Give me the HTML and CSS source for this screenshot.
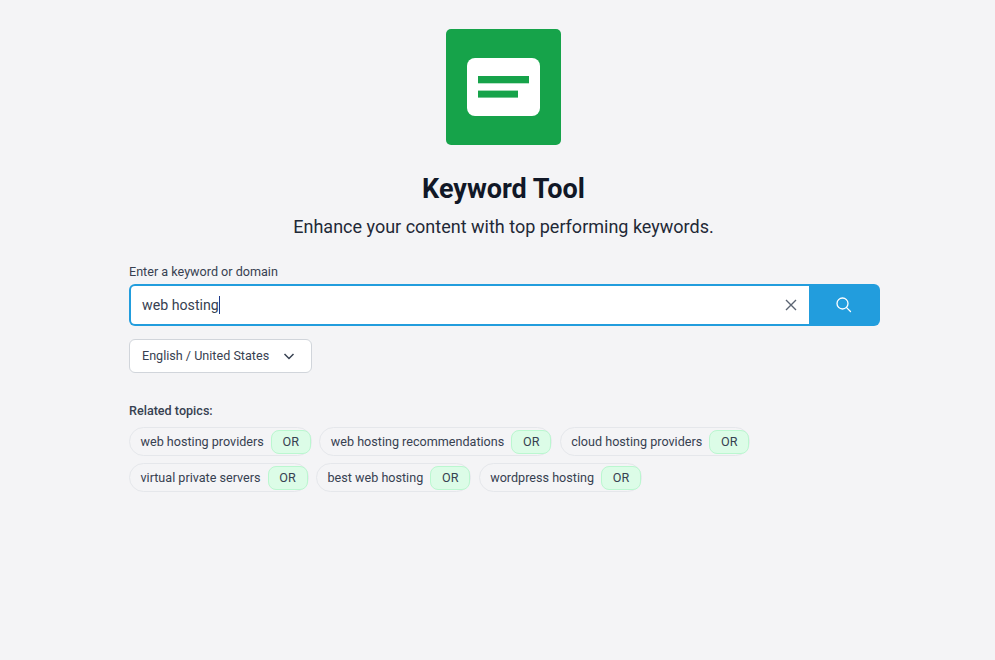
FILE: index.html
```html
<!DOCTYPE html>
<html lang="en">
<head>
<meta charset="utf-8">
<title>Keyword Tool</title>
<link rel="stylesheet" href="styles.css">
</head>
<body>
<main class="page">
  <div class="hero">
    <div class="logo">
      <svg width="73" height="58" viewBox="0 0 73 58"><rect width="73" height="58" rx="8" fill="#fff"/><rect x="11" y="18" width="51" height="7.3" fill="#16a34a"/><rect x="11" y="32.6" width="40" height="7" fill="#16a34a"/></svg>
    </div>
    <h1 class="title">Keyword Tool</h1>
    <p class="subtitle">Enhance your content with top performing keywords.</p>
  </div>
  <div class="form">
    <label class="label">Enter a keyword or domain</label>
    <div class="search">
      <div class="field">
        <span class="value">web hosting</span><span class="caret"></span>
        <svg class="clear" width="14" height="14" viewBox="0 0 14 14"><path d="M2 2l10 10M12 2L2 12" stroke="#5b6472" stroke-width="1.4" fill="none"/></svg>
      </div>
      <button class="go" type="button" aria-label="Search">
        <svg width="18" height="18" viewBox="0 0 18 18"><circle cx="7.5" cy="7.5" r="5.5" stroke="#fff" stroke-width="1.3" fill="none"/><path d="M11.6 11.6l3.9 3.9" stroke="#fff" stroke-width="1.3" fill="none" stroke-linecap="round"/></svg>
      </button>
    </div>
    <button class="select" type="button">
      <span>English / United States</span>
      <svg width="12" height="8" viewBox="0 0 12 8"><path d="M1.5 2l4.5 4.5 4.5-4.5" stroke="#374151" stroke-width="1.5" fill="none"/></svg>
    </button>
    <div class="related">Related topics:</div>
    <div class="rows">
      <div class="row">
        <div class="pill"><span>web hosting providers</span><b class="or">OR</b></div>
        <div class="pill"><span>web hosting recommendations</span><b class="or">OR</b></div>
        <div class="pill"><span>cloud hosting providers</span><b class="or">OR</b></div>
      </div>
      <div class="row">
        <div class="pill"><span>virtual private servers</span><b class="or">OR</b></div>
        <div class="pill"><span>best web hosting</span><b class="or">OR</b></div>
        <div class="pill"><span>wordpress hosting</span><b class="or">OR</b></div>
      </div>
    </div>
  </div>
</main>
</body>
</html>
```
FILE: styles.css
```css
* { box-sizing: border-box; }
html, body { margin: 0; height: 100%; }
body { background: #f4f4f6; font-family: Roboto, "Liberation Sans", sans-serif; color: #111827; overflow: hidden; }
.page { display: flex; flex-direction: column; align-items: center; padding-top: 29px; padding-left: 14px; }
.hero { display: flex; flex-direction: column; align-items: center; padding-right: 2px; }
.logo { width: 115px; height: 116px; background: #16a34a; border-radius: 5px; display: flex; align-items: center; justify-content: center; }
.title { margin: 28px 0 0; font-size: 27px; line-height: 32px; font-weight: 700; color: #111827; }
.subtitle { margin: 9px 0 0; font-size: 18px; line-height: 26px; color: #1f2937; }
.form { width: 751px; margin-top: 23px; }
.label { display: block; font-size: 12.6px; line-height: 18px; color: #374151; }
.search { display: flex; height: 42px; margin-top: 3px; border-radius: 6px; background: #229ddd; }
.field { flex: 1; margin: 2px 0 2px 2px; background: #fff; border-radius: 4px 0 0 4px; display: flex; align-items: center; padding: 0 11px; font-size: 14.2px; color: #374151; }
.caret { width: 1px; height: 18px; background: #1e3a8a; }
.clear { margin-left: auto; }
.go { width: 71px; border: 0; background: transparent; padding: 0 2px 0 0; display: flex; align-items: center; justify-content: center; }
.select { display: flex; align-items: center; justify-content: space-between; width: 183px; height: 34px; margin-top: 13px; padding: 0 16px 1px 12px; background: #fff; border: 1px solid #d1d5db; border-radius: 6px; font: 400 12.6px Roboto, sans-serif; color: #374151; }
.related { margin-top: 29px; font-size: 12.6px; line-height: 18px; font-weight: 500; color: #374151; }
.rows { display: flex; flex-direction: column; row-gap: 7px; margin-top: 7px; }
.row { display: flex; column-gap: 7.5px; }
.pill { display: flex; align-items: center; height: 29px; padding-left: 10.5px; border: 1px solid #e5e7eb; border-radius: 14.5px; font-size: 12.6px; color: #374151; }
.or { display: flex; align-items: center; justify-content: center; width: 40px; height: 24px; margin-left: 7px; background: #dcfce7; border: 1px solid #bbf7d0; border-radius: 8px; font-weight: 400; color: #374151; }
```
